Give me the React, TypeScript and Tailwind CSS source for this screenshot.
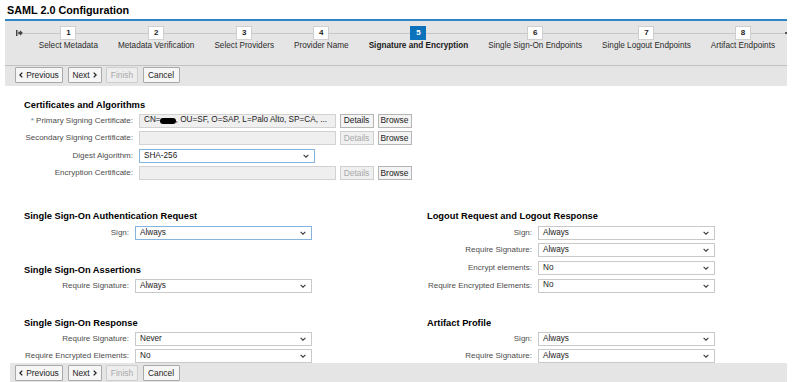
import React from "react";

const steps = [
  "Select Metadata",
  "Metadata Verification",
  "Select Providers",
  "Provider Name",
  "Signature and Encryption",
  "Single Sign-On Endpoints",
  "Single Logout Endpoints",
  "Artifact Endpoints",
];

function Chevron() {
  return (
    <svg width="6" height="4" viewBox="0 0 6 4" className="shrink-0">
      <polyline points="0.6,0.8 3,3.2 5.4,0.8" fill="none" stroke="#444" strokeWidth="1.2" />
    </svg>
  );
}

function Btn({ children, w, disabled }: { children: React.ReactNode; w: string; disabled?: boolean }) {
  return (
    <div
      className={
        "h-[16px] border rounded-[1px] flex items-center justify-center gap-[3px] text-[8.4px] leading-none " +
        w +
        (disabled ? " border-[#cdcdcd] bg-[#ededed] text-[#ababab]" : " border-[#a9a9a9] bg-[#f6f6f6] text-[#222]")
      }
    >
      {children}
    </div>
  );
}

function Toolbar() {
  return (
    <>
      <Btn w="w-[48px]">
        <svg width="4" height="6" viewBox="0 0 4 6">
          <polyline points="3.3,0.6 0.9,3 3.3,5.4" fill="none" stroke="#222" strokeWidth="1.3" />
        </svg>
        <span>Previous</span>
      </Btn>
      <Btn w="w-[34px]">
        <span>Next</span>
        <svg width="4" height="6" viewBox="0 0 4 6">
          <polyline points="0.7,0.6 3.1,3 0.7,5.4" fill="none" stroke="#222" strokeWidth="1.3" />
        </svg>
      </Btn>
      <Btn w="w-[32px]" disabled>
        Finish
      </Btn>
      <Btn w="w-[37px]">Cancel</Btn>
    </>
  );
}

function SmallBtn({ children, disabled, w }: { children: React.ReactNode; disabled?: boolean; w: string }) {
  return (
    <div
      className={
        "h-[14px] border flex items-center justify-center text-[8.4px] leading-none " +
        w +
        (disabled ? " border-[#cfcfcf] bg-[#f0f0f0] text-[#a8a8a8]" : " border-[#b5b5b5] bg-[#f4f4f4] text-[#222]")
      }
    >
      {children}
    </div>
  );
}

function Select({ value, focus, w }: { value: string; focus?: boolean; w: string }) {
  return (
    <div
      className={
        "h-[14px] bg-white border flex items-center justify-between pl-[4px] pr-[5px] text-[8.2px] text-[#1a1a1a] leading-none " +
        w +
        (focus ? " border-[#86b4dc]" : " border-[#c9c9c9]")
      }
    >
      <span>{value}</span>
      <Chevron />
    </div>
  );
}

function CertRow({
  label,
  value,
  detailsEnabled,
  select,
  star,
}: {
  label: string;
  value?: React.ReactNode;
  detailsEnabled?: boolean;
  select?: string;
  star?: boolean;
}) {
  return (
    <div className="flex items-center h-[14px]">
      <div className="w-[109px] text-right text-[8px] text-[#4d4d4d] leading-none whitespace-nowrap">
        {star && <span className="text-[#6a7f99]">* </span>}
        {label}
      </div>
      <div className="ml-[6px]">
        {select ? (
          <Select value={select} focus w="w-[176px]" />
        ) : (
          <div className="w-[197px] h-[14px] bg-[#efefef] border border-[#d2d2d2] flex items-center pl-[4px] text-[8.2px] text-[#222] leading-none whitespace-nowrap overflow-hidden">
            {value}
          </div>
        )}
      </div>
      {!select && (
        <>
          <div className="ml-[3.5px]">
            <SmallBtn w="w-[34px]" disabled={!detailsEnabled}>
              Details
            </SmallBtn>
          </div>
          <div className="ml-[4px]">
            <SmallBtn w="w-[34px]">Browse</SmallBtn>
          </div>
        </>
      )}
    </div>
  );
}

function FormRow({ label, value, focus }: { label: string; value: string; focus?: boolean }) {
  return (
    <div className="flex items-center h-[14px]">
      <div className="w-[105px] text-right text-[8px] text-[#4d4d4d] leading-none whitespace-nowrap">{label}</div>
      <div className="ml-[6px]">
        <Select value={value} focus={focus} w="w-[177px]" />
      </div>
    </div>
  );
}

function Heading({ children }: { children: React.ReactNode }) {
  return <div className="h-[11px] text-[9.3px] font-bold leading-[11px] text-[#000] whitespace-nowrap">{children}</div>;
}

export default function App() {
  return (
    <div className="w-[805px] h-[382px] overflow-hidden bg-white flex flex-col font-['Liberation_Sans',Arial,sans-serif]">
      <div className="h-[19px] shrink-0 pl-[7px] text-[10.8px] font-bold leading-[21px] text-[#000]">
        SAML 2.0 Configuration
      </div>
      <div className="ml-[5px] w-[782px] shrink-0">
        <div className="h-[2px] bg-[#2f87c8]" />
        {/* stepper */}
        <div className="h-[44px] bg-[#e5e5e5] pt-[5px] flex">
          <div className="w-[25px] flex items-center h-[14px]">
            <svg width="7" height="6" viewBox="0 0 7 6" className="ml-[11px] shrink-0">
              <rect x="0" y="0" width="1.5" height="6" fill="#444" />
              <path d="M2.3 1.8 H4 V0.2 L7 3 L4 5.8 V4.2 H2.3 Z" fill="#444" />
            </svg>
            <div className="flex-1 h-px bg-[#c6c6c6]" />
          </div>
          {steps.map((s, i) => {
            const active = i === 4;
            return (
              <div key={s} className="flex flex-col">
                <div className="flex items-center h-[14px]">
                  <div className="flex-1 h-px bg-[#c6c6c6]" />
                  <div
                    className={
                      "w-[16px] h-[14px] flex items-center justify-center text-[8px] font-bold leading-none " +
                      (active ? "bg-[#0b72bb] text-white" : "bg-white border border-[#cfcfcf] text-[#222]")
                    }
                  >
                    {i + 1}
                  </div>
                  <div className="flex-1 h-px bg-[#c6c6c6]" />
                </div>
                <div
                  className={
                    "px-[10px] mt-[0.5px] leading-[10px] text-[8.2px] whitespace-nowrap " +
                    (active ? "font-bold text-[#1a1a1a]" : "text-[#2b2b2b]")
                  }
                >
                  {s}
                </div>
              </div>
            );
          })}
          <div className="flex-1 flex items-center h-[14px]">
            <div className="flex-1 h-px bg-[#c6c6c6]" />
            <div className="w-[2px] h-[2px] bg-[#555]" />
          </div>
        </div>
        <div className="h-px bg-[#c2c2c2]" />
        <div className="h-[20px] bg-[#e5e5e5] flex items-start pt-[1px] pl-[10px] gap-[4.5px]">
          <Toolbar />
        </div>
      </div>

      {/* content */}
      <div className="flex-1 overflow-hidden pl-[24px]">
        <div className="mt-[13.5px]">
          <Heading>Certificates and Algorithms</Heading>
        </div>
        <div className="mt-[3px] flex flex-col gap-[3.6px]">
          <CertRow
            star
            label="Primary Signing Certificate:"
            detailsEnabled
            value={
              <>
                <span>CN=</span>
                <span className="inline-block w-[16px] h-[6px] rounded-full bg-black -ml-[1px]" />
                <span>, OU=SF, O=SAP, L=Palo Alto, SP=CA, ...</span>
              </>
            }
          />
          <CertRow label="Secondary Signing Certificate:" value="" />
          <CertRow label="Digest Algorithm:" select="SHA-256" />
          <CertRow label="Encryption Certificate:" value="" />
        </div>

        <div className="mt-[31px] grid grid-cols-[403px_1fr] gap-y-[24.5px]">
          <div>
            <Heading>Single Sign-On Authentication Request</Heading>
            <div className="mt-[3.5px]">
              <FormRow label="Sign:" value="Always" focus />
            </div>
            <div className="mt-[25px]">
              <Heading>Single Sign-On Assertions</Heading>
            </div>
            <div className="mt-[3.5px]">
              <FormRow label="Require Signature:" value="Always" />
            </div>
          </div>
          <div>
            <Heading>Logout Request and Logout Response</Heading>
            <div className="mt-[3.5px] flex flex-col gap-[3.6px]">
              <FormRow label="Sign:" value="Always" />
              <FormRow label="Require Signature:" value="Always" />
              <FormRow label="Encrypt elements:" value="No" />
              <FormRow label="Require Encrypted Elements:" value="No" />
            </div>
          </div>
          <div>
            <Heading>Single Sign-On Response</Heading>
            <div className="mt-[3px] flex flex-col gap-[3.6px]">
              <FormRow label="Require Signature:" value="Never" />
              <FormRow label="Require Encrypted Elements:" value="No" />
            </div>
          </div>
          <div>
            <Heading>Artifact Profile</Heading>
            <div className="mt-[3px] flex flex-col gap-[3.6px]">
              <FormRow label="Sign:" value="Always" />
              <FormRow label="Require Signature:" value="Always" />
            </div>
          </div>
        </div>
      </div>

      <div className="ml-[10px] w-[777px] h-[19px] shrink-0 bg-[#e5e5e5] flex items-start pt-[2px] pl-[5px] gap-[4.5px]">
        <Toolbar />
      </div>
    </div>
  );
}
